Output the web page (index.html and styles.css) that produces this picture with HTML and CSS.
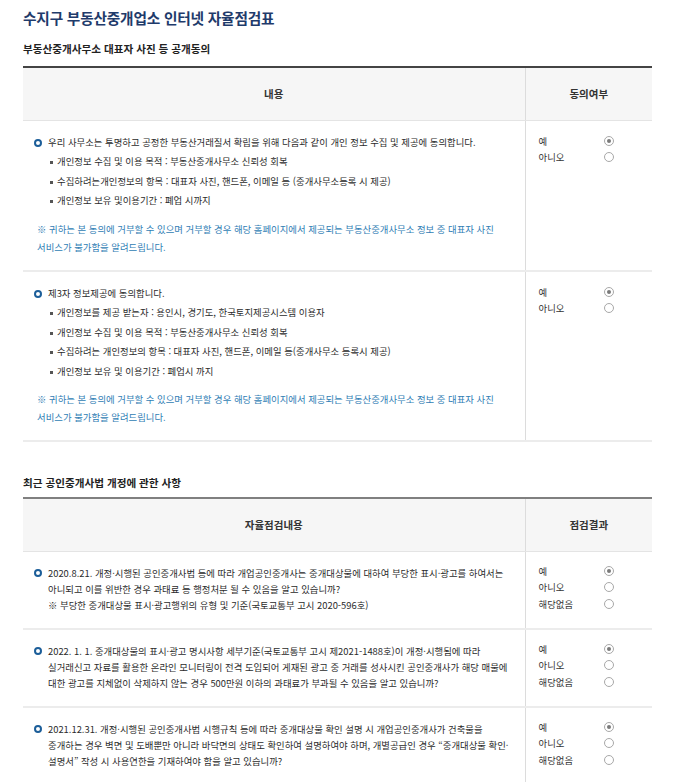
FILE: index.html
```html
<!DOCTYPE html>
<html lang="ko">
<head>
<meta charset="utf-8">
<title>수지구 부동산중개업소 인터넷 자율점검표</title>
<link rel="stylesheet" href="styles.css">
</head>
<body>
<div class="page">
  <h1 class="title">수지구 부동산중개업소 인터넷 자율점검표</h1>

  <h2 class="sub">부동산중개사무소 대표자 사진 등 공개동의</h2>
  <table class="tbl tbl-dark">
    <thead>
      <tr><th class="c1">내용</th><th class="c2">동의여부</th></tr>
    </thead>
    <tbody>
      <tr>
        <td class="c1 consent">
          <p class="lead"><span class="dot"></span>우리 사무소는 투명하고 공정한 부동산거래질서 확립을 위해 다음과 같이 개인 정보 수집 및 제공에 동의합니다.</p>
          <ul class="list">
            <li>개인정보 수집 및 이용 목적 : 부동산중개사무소 신뢰성 회복</li>
            <li>수집하려는개인정보의 항목 : 대표자 사진, 핸드폰, 이메일 등 (중개사무소등록 시 제공)</li>
            <li>개인정보 보유 및이용기간 : 폐업 시까지</li>
          </ul>
          <p class="note">※ 귀하는 본 동의에 거부할 수 있으며 거부할 경우 해당 홈페이지에서 제공되는 부동산중개사무소 정보 중 대표자 사진<br>서비스가 불가함을 알려드립니다.</p>
        </td>
        <td class="c2">
          <div class="radios">
            <span>예</span><span class="radio on"></span>
            <span>아니오</span><span class="radio"></span>
          </div>
        </td>
      </tr>
      <tr>
        <td class="c1 consent">
          <p class="lead"><span class="dot"></span>제3자 정보제공에 동의합니다.</p>
          <ul class="list">
            <li>개인정보를 제공 받는자 : 용인시, 경기도, 한국토지제공시스템 이용자</li>
            <li>개인정보 수집 및 이용 목적 : 부동산중개사무소 신뢰성 회복</li>
            <li>수집하려는 개인정보의 항목 : 대표자 사진, 핸드폰, 이메일 등(중개사무소 등록시 제공)</li>
            <li>개인정보 보유 및 이용기간 : 폐업시 까지</li>
          </ul>
          <p class="note">※ 귀하는 본 동의에 거부할 수 있으며 거부할 경우 해당 홈페이지에서 제공되는 부동산중개사무소 정보 중 대표자 사진<br>서비스가 불가함을 알려드립니다.</p>
        </td>
        <td class="c2">
          <div class="radios">
            <span>예</span><span class="radio on"></span>
            <span>아니오</span><span class="radio"></span>
          </div>
        </td>
      </tr>
    </tbody>
  </table>

  <h2 class="sub sub2">최근 공인중개사법 개정에 관한 사항</h2>
  <table class="tbl tbl-grey">
    <thead>
      <tr><th class="c1">자율점검내용</th><th class="c2">점검결과</th></tr>
    </thead>
    <tbody>
      <tr>
        <td class="c1 check">
          <p class="lead"><span class="dot"></span><span class="txt">2020.8.21. 개정·시행된 공인중개사법 등에 따라 개업공인중개사는 중개대상물에 대하여 부당한 표시·광고를 하여서는<br>아니되고 이를 위반한 경우 과태료 등 행정처분 될 수 있음을 알고 있습니까?<br>※ 부당한 중개대상물 표시·광고행위의 유형 및 기준(국토교통부 고시 2020-596호)</span></p>
        </td>
        <td class="c2">
          <div class="radios r3">
            <span>예</span><span class="radio on"></span>
            <span>아니오</span><span class="radio"></span>
            <span>해당없음</span><span class="radio"></span>
          </div>
        </td>
      </tr>
      <tr>
        <td class="c1 check">
          <p class="lead"><span class="dot"></span><span class="txt">2022. 1. 1. 중개대상물의 표시·광고 명시사항 세부기준(국토교통부 고시 제2021-1488호)이 개정·시행됨에 따라<br>실거래신고 자료를 활용한 온라인 모니터링이 전격 도입되어 게재된 광고 중 거래를 성사시킨 공인중개사가 해당 매물에<br>대한 광고를 지체없이 삭제하지 않는 경우 500만원 이하의 과태료가 부과될 수 있음을 알고 있습니까?</span></p>
        </td>
        <td class="c2">
          <div class="radios r3">
            <span>예</span><span class="radio on"></span>
            <span>아니오</span><span class="radio"></span>
            <span>해당없음</span><span class="radio"></span>
          </div>
        </td>
      </tr>
      <tr>
        <td class="c1 check">
          <p class="lead"><span class="dot"></span><span class="txt">2021.12.31. 개정·시행된 공인중개사법 시행규칙 등에 따라 중개대상물 확인 설명 시 개업공인중개사가 건축물을<br>중개하는 경우 벽면 및 도배뿐만 아니라 바닥면의 상태도 확인하여 설명하여야 하며, 개별공급인 경우 “중개대상물 확인·<br>설명서” 작성 시 사용연한을 기재하여야 함을 알고 있습니까?</span></p>
        </td>
        <td class="c2">
          <div class="radios r3">
            <span>예</span><span class="radio on"></span>
            <span>아니오</span><span class="radio"></span>
            <span>해당없음</span><span class="radio"></span>
          </div>
        </td>
      </tr>
    </tbody>
  </table>
</div>
</body>
</html>
```

FILE: styles.css
```css
* { box-sizing: border-box; }
html, body { margin: 0; padding: 0; background: #fff; }
body {
  font-family: "Noto Sans CJK KR", "Noto Sans", sans-serif;
  color: #2b2b2b;
  font-size: 9.4px;
}
.page {
  width: 652px;
  padding: 8px 0 0 23px;
}
.title {
  margin: 0;
  font-size: 14.7px;
  line-height: 20px;
  font-weight: 700;
  color: #1f3b6b;
  letter-spacing: -0.2px;
}
.sub {
  margin: 14px 0 10px;
  font-size: 10.6px;
  line-height: 14px;
  font-weight: 700;
  color: #222;
}
.sub2 {
  margin: 34px 0 7px;
}
.tbl {
  width: 629px;
  border-collapse: collapse;
  table-layout: fixed;
}
.tbl-dark { border-top: 2px solid #444; }
.tbl-grey { border-top: 2px solid #808080; }
.tbl th {
  background: #f6f6f6;
  height: 53px;
  font-size: 10.5px;
  font-weight: 700;
  color: #333;
  text-align: center;
  padding: 0;
  border-bottom: 1px solid #e4e4e4;
}
.tbl th.c1 { width: 502px; }
.tbl th.c2 { width: 127px; border-left: 1px solid #dcdcdc; }
.tbl td {
  vertical-align: top;
  padding: 0;
  border-bottom: 2px solid #ececec;
}
.tbl td.c2 { border-left: 1px solid #dcdcdc; }

.consent { padding: 12px 10px 14px 11px !important; }
.check { padding: 13px 10px 15px 11px !important; }

.lead {
  margin: 0;
  display: flex;
  align-items: flex-start;
  line-height: 19.5px;
  white-space: nowrap;
}
.check .lead { line-height: 16px; }
.dot {
  flex: none;
  width: 8px;
  height: 8px;
  border: 2px solid #1c5e99;
  border-radius: 50%;
  margin: 6px 6px 0 0;
}
.check .dot { margin-top: 4px; }
.list {
  list-style: none;
  margin: 0;
  padding: 0 0 0 16px;
  line-height: 19.5px;
}
.list li {
  position: relative;
  padding-left: 7px;
  white-space: nowrap;
}
.list li::before {
  content: "";
  position: absolute;
  left: 0;
  top: 9px;
  width: 3px;
  height: 3px;
  background: #555;
}
.note {
  margin: 9px 0 0 3px;
  line-height: 18px;
  color: #2f7db4;
  white-space: nowrap;
}
.radios {
  display: grid;
  grid-template-columns: 65px 10px;
  align-items: center;
  padding: 12px 0 0 13px;
  line-height: 16px;
  color: #333;
}
.radios.r3 { padding-top: 11px; line-height: 16.5px; }
.radio {
  width: 10px;
  height: 10px;
  border: 1px solid #a8a8a8;
  border-radius: 50%;
  background: #fff;
  position: relative;
}
.radio.on::after {
  content: "";
  position: absolute;
  left: 2px;
  top: 2px;
  width: 4px;
  height: 4px;
  border-radius: 50%;
  background: #7a7a7a;
}
```
